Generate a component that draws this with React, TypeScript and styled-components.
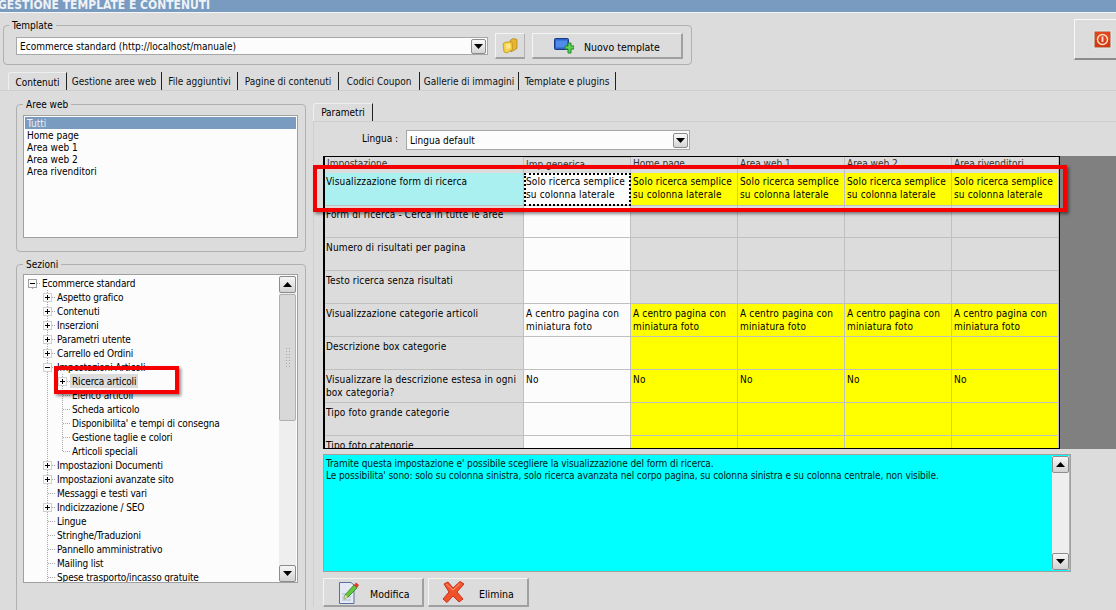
import React from 'react';
import styled, { createGlobalStyle } from 'styled-components';

const treeRows: { label: string; level: number; node?: 'plus' | 'minus'; last?: boolean; focus?: boolean }[] = [
  { label: 'Ecommerce standard', level: 0, node: 'minus' },
  { label: 'Aspetto grafico', level: 1, node: 'plus' },
  { label: 'Contenuti', level: 1, node: 'plus' },
  { label: 'Inserzioni', level: 1, node: 'plus' },
  { label: 'Parametri utente', level: 1, node: 'plus' },
  { label: 'Carrello ed Ordini', level: 1, node: 'plus' },
  { label: 'Impostazioni Articoli', level: 1, node: 'minus' },
  { label: 'Ricerca articoli', level: 2, node: 'plus', focus: true },
  { label: 'Elenco articoli', level: 2 },
  { label: 'Scheda articolo', level: 2 },
  { label: "Disponibilita' e tempi di consegna", level: 2 },
  { label: 'Gestione taglie e colori', level: 2 },
  { label: 'Articoli speciali', level: 2, last: true },
  { label: 'Impostazioni Documenti', level: 1, node: 'plus' },
  { label: 'Impostazioni avanzate sito', level: 1, node: 'plus' },
  { label: 'Messaggi e testi vari', level: 1 },
  { label: 'Indicizzazione / SEO', level: 1, node: 'plus' },
  { label: 'Lingue', level: 1 },
  { label: 'Stringhe/Traduzioni', level: 1 },
  { label: 'Pannello amministrativo', level: 1 },
  { label: 'Mailing list', level: 1 },
  { label: 'Spese trasporto/incasso gratuite', level: 1 },
];

const tabs = ['Contenuti', 'Gestione aree web', 'File aggiuntivi', 'Pagine di contenuti', 'Codici Coupon', 'Gallerie di immagini', 'Template e plugins'];
const tabWidths = [59, 95, 76, 101, 81, 99, 97];
const areas = ['Tutti', 'Home page', 'Area web 1', 'Area web 2', 'Area rivenditori'];
const headers = ['Impostazione', 'Imp.generica', 'Home page', 'Area web 1', 'Area web 2', 'Area rivenditori'];

const SOLO = 'Solo ricerca semplice su colonna laterale';
const CENTRO = 'A centro pagina con miniatura foto';
const gridRows: { label: string; value?: string; yellow: boolean; height: number }[] = [
  { label: 'Visualizzazione form di ricerca', value: SOLO, yellow: true, height: 33 },
  { label: 'Form di ricerca - Cerca in tutte le aree', yellow: false, height: 32 },
  { label: 'Numero di risultati per pagina', yellow: false, height: 33 },
  { label: 'Testo ricerca senza risultati', yellow: false, height: 33 },
  { label: 'Visualizzazione categorie articoli', value: CENTRO, yellow: true, height: 33 },
  { label: 'Descrizione box categorie', yellow: true, height: 33 },
  { label: 'Visualizzare la descrizione estesa in ogni box categoria?', value: 'No', yellow: true, height: 33 },
  { label: 'Tipo foto grande categorie', yellow: true, height: 33 },
  { label: 'Tipo foto categorie', yellow: true, height: 33 },
];

const TreeGlyph = ({ kind }: { kind: 'pass' | 'branch' | 'last' | 'plus' | 'minus' | 'blank' }) => {
  const dot = { stroke: '#a8a8a8', strokeDasharray: '1 1', fill: 'none' };
  return (
    <svg width="15" height="14" viewBox="0 0 15 14" style={{ flex: 'none', display: 'block' }}>
      {kind !== 'blank' && <path d={kind === 'last' ? 'M7.5 0V7' : 'M7.5 0V14'} {...dot} />}
      {kind !== 'blank' && kind !== 'pass' && <path d="M8 7.5H15" {...dot} />}
      {(kind === 'plus' || kind === 'minus') && (
        <>
          <rect x="3.5" y="3.5" width="8" height="8" fill="#fcfcfc" stroke="#d0d0d0" />
          <path d={kind === 'plus' ? 'M5 7.5H10M7.5 5V10' : 'M5 7.5H10'} stroke="#000" fill="none" />
        </>
      )}
    </svg>
  );
};

const RootGlyph = () => (
  <svg width="15" height="14" viewBox="0 0 15 14" style={{ flex: 'none', display: 'block' }}>
    <path d="M8 7.5H15M7.5 12V14" stroke="#a8a8a8" strokeDasharray="1 1" fill="none" />
    <rect x="3.5" y="3.5" width="8" height="8" fill="#fcfcfc" stroke="#a0a0a0" />
    <path d="M5 7.5H10" stroke="#000" fill="none" />
  </svg>
);

const FolderIcon = () => (
  <svg width="16" height="16" viewBox="0 0 16 16">
    <path d="M8 2.5 L11 0.5 L15 1.5 L15 10.5 L9 14 Z" fill="#e8b52c" stroke="#a9841f" strokeWidth="0.7" />
    <path d="M1 5.5 L4 4 L10 4 L10.5 11.5 L5 15 L2 14 Z" fill="#f8cf45" stroke="#b08a20" strokeWidth="0.7" />
    <path d="M3.5 6.5 L8 5.5 L8.5 9.5 L4.5 11.5 Z" fill="#ffe98f" />
  </svg>
);

const NewTemplateIcon = () => (
  <svg width="20" height="16" viewBox="0 0 20 16">
    <rect x="0.5" y="0.5" width="14" height="11" rx="1" fill="#2f62c8" stroke="#1b3a86" />
    <rect x="2" y="2.5" width="11" height="7" fill="#4f8be8" />
    <path d="M11 8h3V5h3v3h3v3h-3v4h-3v-4h-3z" fill="#5fd34f" stroke="#1f8a25" />
  </svg>
);

const EditIcon = () => (
  <svg width="20" height="23" viewBox="0 0 20 23">
    <path d="M0.5 1.5H12L15 4V22.5H0.5Z" fill="#e4e9f4" stroke="#5a6f9c" />
    <path d="M3 13h6M3 16h9M3 19h9" stroke="#aab6d0" />
    <path d="M5 18 L6 14 L15 4 L18 7 L9 16 Z" fill="#63c83c" stroke="#2f7f1d" strokeWidth="0.8" />
    <path d="M5 18 L6 14 L9 16 Z" fill="#f2dcb0" />
    <path d="M15 4 L17 1.5 L20 4 L18 7 Z" fill="#dc3f2e" />
  </svg>
);

const DeleteIcon = () => (
  <svg width="23" height="22" viewBox="0 0 23 22">
    <path
      d="M2 3 L6 1 L11 7 L18 0.5 L22 3 L15 11 L21 18 L17 21 L11 15 L5 21.5 L1 18 L7 11 Z"
      fill="#f0532a"
      stroke="#c8321a"
      strokeLinejoin="round"
    />
    <path d="M4 3 L11 9 L18 2.5" stroke="#ff9a78" fill="none" />
  </svg>
);

const PowerIcon = () => (
  <svg width="17" height="17" viewBox="0 0 17 17">
    <rect x="0.5" y="0.5" width="16" height="16" rx="1" fill="#e2451c" stroke="#c8a08e" />
    <rect x="1" y="9" width="15" height="7" fill="#d13a12" />
    <circle cx="8.5" cy="8.5" r="5" fill="none" stroke="#fde3d0" strokeWidth="1.4" />
    <rect x="7.6" y="5.5" width="1.8" height="5.5" fill="#fde3d0" />
  </svg>
);

const Triangle = ({ up }: { up?: boolean }) => (
  <svg width="9" height="5" viewBox="0 0 9 5">
    <path d={up ? 'M0 5L4.5 0L9 5Z' : 'M0 0L9 0L4.5 5Z'} fill="#000" />
  </svg>
);

const App: React.FC = () => (
  <Page>
    <GlobalStyle />
    <TitleBar>
      <TitleText>GESTIONE TEMPLATE E CONTENUTI</TitleText>
    </TitleBar>

    <TopRow>
      <TemplateGroup>
        <GroupLegend>Template</GroupLegend>
        <TemplateRow>
          <Combo $width={472} $height={18}>
            <ComboText>Ecommerce standard (http://localhost/manuale)</ComboText>
            <ComboArrow><Triangle /></ComboArrow>
          </Combo>
          <FolderButton><FolderIcon /></FolderButton>
          <ActionButton $width={151} $height={26} $pad={21} $gap={10}>
            <NewTemplateIcon />
            <ButtonLabel>Nuovo template</ButtonLabel>
          </ActionButton>
        </TemplateRow>
      </TemplateGroup>
      <CloseButton>
        <PowerHolder><PowerIcon /></PowerHolder>
      </CloseButton>
    </TopRow>

    <TabBar>
      {tabs.map((t, i) => (
        <Tab key={t} $active={i === 0} $width={tabWidths[i]}>{t}</Tab>
      ))}
    </TabBar>

    <Body>
      <LeftColumn>
        <AreaGroup>
          <GroupLegend>Aree web</GroupLegend>
          <AreaList>
            {areas.map((a, i) => (
              <AreaItem key={a} $selected={i === 0}>{a}</AreaItem>
            ))}
          </AreaList>
        </AreaGroup>

        <SectionGroup>
          <GroupLegend>Sezioni</GroupLegend>
          <TreeBox>
            <TreeList>
              {treeRows.map(r => (
                <TreeRow key={r.label}>
                  {r.level === 0 && <RootGlyph />}
                  {r.level > 0 && <TreeGlyph kind="blank" />}
                  {r.level === 1 && <TreeGlyph kind={r.node || 'branch'} />}
                  {r.level === 2 && <TreeGlyph kind="pass" />}
                  {r.level === 2 && <TreeGlyph kind={r.node || (r.last ? 'last' : 'branch')} />}
                  <TreeLabel $focus={r.focus}>{r.label}</TreeLabel>
                </TreeRow>
              ))}
            </TreeList>
            <TreeScroll>
              <ScrollButton><Triangle up /></ScrollButton>
              <ScrollThumb>
                <ThumbGrip />
              </ScrollThumb>
              <ScrollTrack />
              <ScrollButton><Triangle /></ScrollButton>
            </TreeScroll>
          </TreeBox>
        </SectionGroup>
      </LeftColumn>

      <RightColumn>
        <ParamTabBar>
          <ParamTab>Parametri</ParamTab>
        </ParamTabBar>
        <ParamPanel>
          <LanguageRow>
            <LanguageLabel>Lingua :</LanguageLabel>
            <Combo $width={284} $height={20}>
              <ComboText>Lingua default</ComboText>
              <ComboArrow><Triangle /></ComboArrow>
            </Combo>
          </LanguageRow>

          <GridArea>
            <Grid>
              <GridHeader>
                {headers.map((h, i) => (
                  <HeaderCell key={h} $current={i === 1}>{h}</HeaderCell>
                ))}
              </GridHeader>
              {gridRows.map((row, r) => (
                <GridRow key={row.label} $height={row.height} $top={r < 2 ? 2 : 3}>
                  <LabelCell $current={r === 0}>{row.label}</LabelCell>
                  <ValueCell $focus={r === 0}>{row.value}</ValueCell>
                  {[0, 1, 2, 3].map(c => (
                    <AreaCell key={c} $yellow={row.yellow}>{row.value}</AreaCell>
                  ))}
                </GridRow>
              ))}
            </Grid>
            <GridFill />
          </GridArea>

          <HelpBox>
            <HelpText>
              Tramite questa impostazione e' possibile scegliere la visualizzazione del form di ricerca.
              <br />
              Le possibilita' sono: solo su colonna sinistra, solo ricerca avanzata nel corpo pagina, su colonna sinistra e su colonna centrale, non visibile.
            </HelpText>
            <HelpScroll>
              <ScrollButton><Triangle up /></ScrollButton>
              <ScrollTrack />
              <ScrollButton><Triangle /></ScrollButton>
            </HelpScroll>
          </HelpBox>

          <ButtonRow>
            <ActionButton $width={101} $height={29} $pad={15} $gap={11}>
              <EditIcon />
              <ButtonLabel>Modifica</ButtonLabel>
            </ActionButton>
            <ActionButton $width={101} $height={29} $pad={13} $gap={14}>
              <DeleteIcon />
              <ButtonLabel>Elimina</ButtonLabel>
            </ActionButton>
          </ButtonRow>
        </ParamPanel>
      </RightColumn>
    </Body>

    <RowHighlight />
    <TreeHighlight />
  </Page>
);

export default App;

// Styles
const GlobalStyle = createGlobalStyle`
  html, body {
    margin: 0;
    padding: 0;
    background: #dcdcdc;
  }
  * {
    box-sizing: border-box;
  }
`;

const Page = styled.div`
  position: relative;
  width: 1116px;
  height: 610px;
  overflow: hidden;
  background: #dcdcdc;
  color: #000;
  font-family: 'DejaVu Sans Condensed', 'DejaVu Sans', sans-serif;
  font-stretch: condensed;
  font-size: 10px;
`;

const TitleBar = styled.div`
  height: 13px;
  background: #7a9bc0;
  border-bottom: 1px solid #f4f6f8;
  display: flex;
  align-items: flex-end;
  overflow: hidden;
`;

const TitleText = styled.div`
  margin-left: -2px;
  color: #eef2f6;
  font-weight: 700;
  font-size: 12px;
  line-height: 14px;
  white-space: nowrap;
`;

const TopRow = styled.div`
  height: 59px;
  padding: 6px 0 0 3px;
  display: flex;
  align-items: flex-start;
  justify-content: space-between;
`;

const GroupBox = styled.fieldset`
  margin: 0;
  min-width: 0;
  border: 1px solid #b0b0b0;
  border-radius: 4px;
`;

const GroupLegend = styled.legend`
  padding: 1px 3px 0;
  line-height: 12px;
`;

const TemplateGroup = styled(GroupBox)`
  width: 689px;
  height: 46px;
  padding: 1px 8px 0 5px;
`;

const TemplateRow = styled.div`
  display: flex;
  align-items: flex-start;
  gap: 7px;
  padding-left: 7px;
`;

const Combo = styled.div<{ $width: number; $height: number }>`
  width: ${p => p.$width}px;
  height: ${p => p.$height}px;
  flex: none;
  margin-top: 4px;
  display: flex;
  align-items: center;
  justify-content: space-between;
  background: #fcfcfc;
  border: 1px solid #a8a8a8;
  padding: 0 1px 0 3px;
`;

const ComboText = styled.span`
  white-space: nowrap;
`;

const ComboArrow = styled.span`
  width: 15px;
  height: 15px;
  display: flex;
  align-items: center;
  justify-content: center;
  background: linear-gradient(#fafafa, #d4d4d4);
  border: 1px solid #8c8c8c;
  border-radius: 2px;
`;

const FolderButton = styled.div`
  width: 30px;
  height: 26px;
  flex: none;
  display: flex;
  align-items: center;
  justify-content: center;
  background: #dcdcdc;
  border: 1px solid;
  border-color: #f4f4f4 #b0b0b0 #a0a0a0 #f4f4f4;
  border-bottom-width: 2px;
`;

const ActionButton = styled.div<{ $width: number; $height: number; $pad: number; $gap: number }>`
  width: ${p => p.$width}px;
  height: ${p => p.$height}px;
  flex: none;
  display: flex;
  align-items: center;
  gap: ${p => p.$gap}px;
  padding-left: ${p => p.$pad}px;
  background: #dcdcdc;
  border-style: solid;
  border-width: 1px 2px 2px 1px;
  border-color: #f4f4f4 #a0a0a0 #a0a0a0 #f4f4f4;
  white-space: nowrap;
`;

const ButtonLabel = styled.span`
  padding-top: 3px;
  font-size: 10.5px;
`;

const CloseButton = styled.div`
  width: 44px;
  height: 41px;
  margin-right: -2px;
  display: flex;
  align-items: center;
  padding-left: 18px;
  border-style: solid;
  border-width: 1px 0 2px 1px;
  border-color: #f8f8f8 #f8f8f8 #8c8c8c #f8f8f8;
`;

const PowerHolder = styled.div`
  display: flex;
  background: #e2e2e2;
  padding: 1px;
`;

const TabBar = styled.div`
  height: 19px;
  padding-left: 8px;
  display: flex;
  border-bottom: 1px solid #cfcfcf;
`;

const Tab = styled.div<{ $active?: boolean; $width: number }>`
  width: ${p => p.$width}px;
  height: 18px;
  padding-top: 1px;
  display: flex;
  align-items: center;
  justify-content: center;
  white-space: nowrap;
  border-right: 1px solid #222;
  border-left: ${p => (p.$active ? '1px solid #efefef' : '0')};
  border-top: ${p => (p.$active ? '1px solid #efefef' : '0')};
  border-top-left-radius: ${p => (p.$active ? '3px' : '0')};
  color: ${p => (p.$active ? '#000' : '#111')};
`;

const Body = styled.div`
  display: flex;
  padding-left: 16px;
`;

const LeftColumn = styled.div`
  width: 290px;
  flex: none;
  padding-top: 7px;
  display: flex;
  flex-direction: column;
  gap: 6px;
`;

const AreaGroup = styled(GroupBox)`
  height: 154px;
  padding: 4px 7px 0 6px;
`;

const AreaList = styled.div`
  height: 123px;
  background: #fcfcfc;
  border: 1px solid #a0a0a0;
  padding: 1px;
`;

const AreaItem = styled.div<{ $selected?: boolean }>`
  height: 12px;
  line-height: 14px;
  padding-left: 2px;
  background: ${p => (p.$selected ? '#7a9bc0' : 'transparent')};
  color: ${p => (p.$selected ? '#f0f0f0' : '#000')};
`;

const SectionGroup = styled(GroupBox)`
  height: 380px;
  padding: 3px 7px 0 6px;
`;

const TreeBox = styled.div`
  height: 309px;
  display: flex;
  background: #fcfcfc;
  border: 1px solid #a0a0a0;
  padding: 1px 0 0 1px;
`;

const TreeList = styled.div`
  flex: 1;
  min-width: 0;
  overflow: hidden;
`;

const TreeRow = styled.div`
  height: 14px;
  display: flex;
  align-items: center;
  white-space: nowrap;
`;

const TreeLabel = styled.span<{ $focus?: boolean }>`
  height: 14px;
  line-height: 16px;
  padding: 0 2px;
  letter-spacing: -0.15px;
  background: ${p => (p.$focus ? '#dcdcdc' : 'transparent')};
`;

const ScrollColumn = styled.div`
  flex: none;
  display: flex;
  flex-direction: column;
  background: #eeeeee;
`;

const TreeScroll = styled(ScrollColumn)`
  width: 17px;
  margin-right: 1px;
`;

const ScrollButton = styled.div`
  height: 17px;
  flex: none;
  display: flex;
  align-items: center;
  justify-content: center;
  background: linear-gradient(#f6f6f6, #d2d2d2);
  border: 1px solid #8c8c8c;
  border-radius: 2px;
`;

const ScrollThumb = styled.div`
  height: 127px;
  flex: none;
  margin-top: 1px;
  display: flex;
  align-items: center;
  justify-content: center;
  background: #d8d8d8;
  border: 1px solid #b0b0b0;
  border-radius: 2px;
`;

const ThumbGrip = styled.div`
  width: 6px;
  height: 22px;
  background-image: radial-gradient(#a8a8a8 0.6px, transparent 0.8px);
  background-size: 3px 3px;
`;

const ScrollTrack = styled.div`
  flex: 1;
`;

const RightColumn = styled.div`
  flex: 1;
  min-width: 0;
  margin-left: 7px;
  padding-top: 12px;
`;

const ParamTabBar = styled.div`
  height: 18px;
  display: flex;
`;

const ParamTab = styled.div`
  width: 60px;
  height: 18px;
  display: flex;
  align-items: center;
  justify-content: center;
  border-top: 1px solid #efefef;
  border-left: 1px solid #efefef;
  border-right: 1px solid #222;
  border-top-left-radius: 3px;
`;

const ParamPanel = styled.div`
  border-top: 1px solid #cfcfcf;
  border-left: 1px solid #cfcfcf;
  padding: 4px 0 0 9px;
`;

const LanguageRow = styled.div`
  height: 30px;
  display: flex;
  align-items: flex-start;
`;

const LanguageLabel = styled.div`
  width: 44px;
  margin-left: 39px;
  margin-top: 7px;
  line-height: 12px;
`;

const GridArea = styled.div`
  height: 293px;
  display: flex;
`;

const Grid = styled.div`
  width: 737px;
  flex: none;
  overflow: hidden;
  border-style: solid;
  border-width: 1px 1px 1px 2px;
  border-color: #000;
`;

const GridHeader = styled.div`
  height: 16px;
  display: grid;
  grid-template-columns: 199px repeat(5, 107px);
`;

const HeaderCell = styled.div<{ $current?: boolean }>`
  padding-left: 2px;
  line-height: 13px;
  color: #333;
  white-space: nowrap;
  border-right: 1px solid #c0c0c0;
  border-top: ${p => (p.$current ? '1px solid #c4c4c4' : '0')};
`;

const GridRow = styled.div<{ $height: number; $top: number }>`
  height: ${p => p.$height}px;
  display: grid;
  grid-template-columns: 199px repeat(5, 107px);
  line-height: 13px;

  & > div {
    padding-top: ${p => p.$top}px;
  }
`;

const GridCell = styled.div`
  padding-left: 2px;
  letter-spacing: 0.15px;
  border-right: 1px solid #c0c0c0;
  border-bottom: 1px solid #c0c0c0;
  overflow: hidden;
`;

const LabelCell = styled(GridCell)<{ $current?: boolean }>`
  padding-left: 1px;
  background: ${p => (p.$current ? '#aaf0f0' : '#dcdcdc')};
`;

const ValueCell = styled(GridCell)<{ $focus?: boolean }>`
  background: #fcfcfc;
  outline: ${p => (p.$focus ? '2px dotted #000' : '0')};
  outline-offset: -2px;
`;

const AreaCell = styled(GridCell)<{ $yellow: boolean }>`
  background: ${p => (p.$yellow ? '#ffff00' : '#dcdcdc')};
`;

const GridFill = styled.div`
  flex: 1;
  background: #808080;
`;

const HelpBox = styled.div`
  width: 748px;
  height: 118px;
  margin-top: 5px;
  display: flex;
  background: #00ffff;
  border: 1px solid #a0a0a0;
`;

const HelpText = styled.div`
  flex: 1;
  min-width: 0;
  padding: 3px 0 0 2px;
  line-height: 12px;
  letter-spacing: -0.09px;
  color: #002020;
`;

const HelpScroll = styled(ScrollColumn)`
  width: 17px;
  height: 114px;
  margin: 1px 1px 0 0;
`;

const ButtonRow = styled.div`
  margin-top: 6px;
  display: flex;
  gap: 4px;
`;

const Highlight = styled.div`
  position: absolute;
  border: 4px solid #f50000;
  box-shadow: 2px 2px 3px rgba(0, 0, 0, 0.45);
`;

const RowHighlight = styled(Highlight)`
  left: 313px;
  top: 165px;
  width: 754px;
  height: 47px;
`;

const TreeHighlight = styled(Highlight)`
  left: 54px;
  top: 366px;
  width: 125px;
  height: 28px;
`;
